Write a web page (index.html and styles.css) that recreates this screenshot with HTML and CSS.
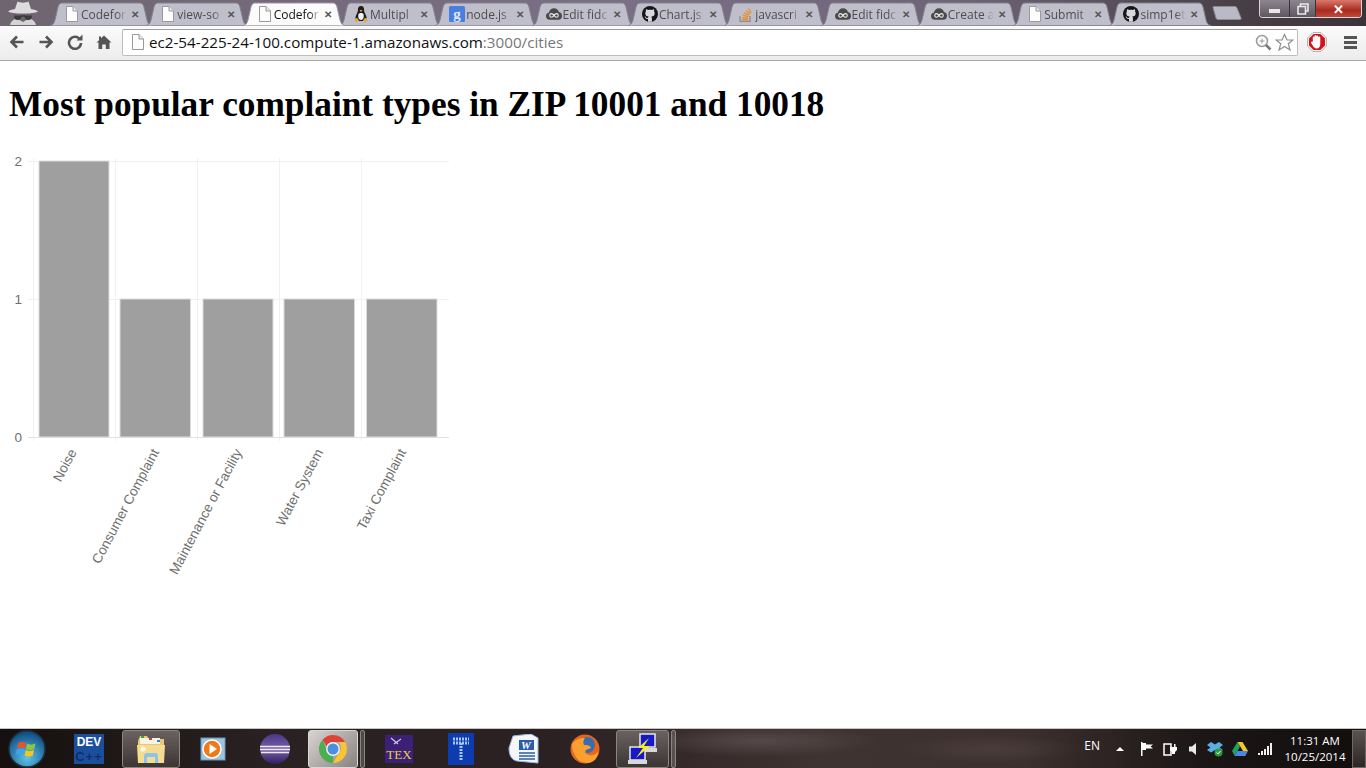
FILE: index.html
```html
<!DOCTYPE html>
<html lang="en">

<head>
    <meta charset="UTF-8">
    <title>Codefor cities</title>
    <link rel="stylesheet" href="styles.css">
</head>

<body>
    <svg class="defs" width="0" height="0">
        <defs>
            <path id="tab-bg" d="M0 23.500C3 23.500 4 21 5 18L8 5C8.600 2.500 10 1 12 1H90C92 1 93.400 2.500 94 5L97 18C98 21 99 23.500 102 23.500" />
            <g id="ic-doc">
                <path d="M2.500 .5H9L13.500 5V15.500H2.500Z" fill="#fdfdfd" stroke="#9a9a9a" />
                <path d="M9 .5V5H13.500" fill="#e6e6e6" stroke="#9a9a9a" />
            </g>
            <g id="ic-cloud">
                <path d="M4 14C1.500 14 0 12.300 0 10.300C0 8.400 1.300 7 3 6.800C3.500 4 5.700 2 8.500 2C11 2 13 3.500 13.700 5.800C15.900 6 17 7.800 17 10C17 12.300 15.500 14 13 14Z" fill="#4a4a4a" />
                <path d="M8.500 9.500C7.500 8 6.800 7.600 5.800 7.600C4.700 7.600 4 8.400 4 9.500C4 10.600 4.700 11.400 5.800 11.400C6.800 11.400 7.500 11 8.500 9.500C9.500 8 10.200 7.600 11.200 7.600C12.300 7.600 13 8.400 13 9.500C13 10.600 12.300 11.400 11.200 11.400C10.200 11.400 9.500 11 8.500 9.500Z" fill="none" stroke="#ececec" stroke-width="1.200" />
            </g>
            <g id="ic-github">
                <circle cx="8" cy="8" r="8" fill="#161616" />
                <path d="M6 15.800V13C3.800 13.400 3.300 12 3 11.300C2.800 10.900 2.300 10.500 2.700 10.400C3.400 10.400 3.800 11 4.100 11.400C4.700 12.300 5.500 12 6.100 11.800C6.200 11.200 6.400 10.800 6.700 10.600C4.600 10.300 3.300 9.400 3.300 7.200C3.300 6.400 3.600 5.700 4 5.200C3.800 4.800 3.700 4 4.100 3.200C4.900 3.200 5.600 3.600 6.100 4C7.300 3.700 8.700 3.700 9.900 4C10.400 3.600 11.100 3.200 11.900 3.200C12.300 4 12.200 4.800 12 5.200C12.400 5.700 12.700 6.400 12.700 7.200C12.700 9.400 11.400 10.300 9.300 10.600C9.700 11 9.900 11.500 9.900 12.200V15.800Z" fill="#d8d8e0" />
            </g>
        </defs>
    </svg>

    <header class="frame">
        <svg class="incognito" width="36" height="25" viewBox="0 0 36 25">
            <path d="M10 9L12.500 1.500C15 3 21 3 23.500 1.500L26 9C29 9.500 32 10.500 33 11.500C30 13 26 13.500 18 13.500C10 13.500 6 13 3 11.500C4 10.500 7 9.500 10 9Z" fill="#dcdcdc" />
            <path d="M5 25C6 21 9 19 12 18.500L18 22L24 18.500C27 19 30 21 31 25Z" fill="#d4d4d4" />
            <path d="M9 15.500H16.500C16.800 18.500 15.200 20 12.700 20C10.200 20 9 18.500 9 15.500ZM19.500 15.500H27C27 18.500 25.800 20 23.300 20C20.800 20 19.200 18.500 19.500 15.500Z" fill="#3a3a3a" />
            <path d="M16 16H20" stroke="#3a3a3a" stroke-width="1.500" />
        </svg>

        <nav class="tabs">
            <div class="tab">
                <svg class="tab-shape" viewBox="0 0 102 24"><use href="#tab-bg" /></svg>
                <svg class="favicon" viewBox="0 0 16 16"><use href="#ic-doc" /></svg>
                <span class="tab-title">Codefor</span><span class="tab-close">&#10005;</span>
            </div>
            <div class="tab">
                <svg class="tab-shape" viewBox="0 0 102 24"><use href="#tab-bg" /></svg>
                <svg class="favicon" viewBox="0 0 16 16"><use href="#ic-doc" /></svg>
                <span class="tab-title">view-so</span><span class="tab-close">&#10005;</span>
            </div>
            <div class="tab tab-active">
                <svg class="tab-shape" viewBox="0 0 102 24"><use href="#tab-bg" /></svg>
                <svg class="favicon" viewBox="0 0 16 16"><use href="#ic-doc" /></svg>
                <span class="tab-title">Codefor</span><span class="tab-close">&#10005;</span>
            </div>
            <div class="tab">
                <svg class="tab-shape" viewBox="0 0 102 24"><use href="#tab-bg" /></svg>
                <svg class="favicon" viewBox="0 0 16 16">
                    <path d="M8 0C5.500 0 4.800 2 4.900 4.500C5 6.500 3 8.500 2.500 11C2.300 12.500 3 15 8 15C13 15 13.700 12.500 13.500 11C13 8.500 11 6.500 11.100 4.500C11.200 2 10.500 0 8 0Z" fill="#1c1c1c" />
                    <path d="M5.500 8C5 10 5 13.500 8 14C11 13.500 11 10 10.500 8C10 6.500 6 6.500 5.500 8Z" fill="#f2f2f2" />
                    <path d="M6.500 4.500L8 3.800L9.500 4.500L8 6Z" fill="#e8a820" />
                    <path d="M1.500 14.500L4 11.500L6 14.500L3.500 16ZM14.500 14.500L12 11.500L10 14.500L12.500 16Z" fill="#e8a820" />
                </svg>
                <span class="tab-title">Multipl</span><span class="tab-close">&#10005;</span>
            </div>
            <div class="tab">
                <svg class="tab-shape" viewBox="0 0 102 24"><use href="#tab-bg" /></svg>
                <svg class="favicon" viewBox="0 0 16 16">
                    <rect width="16" height="16" rx="1.500" fill="#4a7de0" />
                    <text class="g-letter" x="8" y="13">g</text>
                </svg>
                <span class="tab-title">node.js</span><span class="tab-close">&#10005;</span>
            </div>
            <div class="tab">
                <svg class="tab-shape" viewBox="0 0 102 24"><use href="#tab-bg" /></svg>
                <svg class="favicon" viewBox="0 0 17 16"><use href="#ic-cloud" /></svg>
                <span class="tab-title">Edit fidc</span><span class="tab-close">&#10005;</span>
            </div>
            <div class="tab">
                <svg class="tab-shape" viewBox="0 0 102 24"><use href="#tab-bg" /></svg>
                <svg class="favicon" viewBox="0 0 16 16"><use href="#ic-github" /></svg>
                <span class="tab-title">Chart.js</span><span class="tab-close">&#10005;</span>
            </div>
            <div class="tab">
                <svg class="tab-shape" viewBox="0 0 102 24"><use href="#tab-bg" /></svg>
                <svg class="favicon" viewBox="0 0 16 16">
                    <path d="M2 10V15.500H12V10" fill="none" stroke="#8c8c8c" stroke-width="1.300" />
                    <path d="M4 13.800H10M4.200 11.600L10 12.200M4.800 9.300L10.300 10.600M6 6.800L11 9.200M8 4.500L12 8M10.500 2.500L13.200 6.800" fill="none" stroke="#e8912c" stroke-width="1.400" />
                </svg>
                <span class="tab-title">javascri</span><span class="tab-close">&#10005;</span>
            </div>
            <div class="tab">
                <svg class="tab-shape" viewBox="0 0 102 24"><use href="#tab-bg" /></svg>
                <svg class="favicon" viewBox="0 0 17 16"><use href="#ic-cloud" /></svg>
                <span class="tab-title">Edit fidc</span><span class="tab-close">&#10005;</span>
            </div>
            <div class="tab">
                <svg class="tab-shape" viewBox="0 0 102 24"><use href="#tab-bg" /></svg>
                <svg class="favicon" viewBox="0 0 17 16"><use href="#ic-cloud" /></svg>
                <span class="tab-title">Create a</span><span class="tab-close">&#10005;</span>
            </div>
            <div class="tab">
                <svg class="tab-shape" viewBox="0 0 102 24"><use href="#tab-bg" /></svg>
                <svg class="favicon" viewBox="0 0 16 16"><use href="#ic-doc" /></svg>
                <span class="tab-title">Submit</span><span class="tab-close">&#10005;</span>
            </div>
            <div class="tab">
                <svg class="tab-shape" viewBox="0 0 102 24"><use href="#tab-bg" /></svg>
                <svg class="favicon" viewBox="0 0 16 16"><use href="#ic-github" /></svg>
                <span class="tab-title">simp1et</span><span class="tab-close">&#10005;</span>
            </div>
            <svg class="new-tab" width="30" height="14" viewBox="0 0 30 14">
                <path d="M1 1.500C1 1 1.500 .5 2 .5H23C24 .5 24.500 1 25 2L29 12C29.300 13 29 13.500 28 13.500H6C5 13.500 4.500 13 4 12Z" />
            </svg>
        </nav>

        <div class="win-controls">
            <div class="win-btn win-min"><span class="min-glyph"></span></div>
            <div class="win-btn win-max">
                <svg width="12" height="12" viewBox="0 0 12 12">
                    <path d="M3.500 3V1H11V8H9M1 3.500H8.500V11H1Z" fill="none" stroke="#e8e8e8" stroke-width="1.600" />
                </svg>
            </div>
            <div class="win-btn win-close">&#10005;</div>
        </div>
    </header>

    <div class="toolbar">
        <svg class="tool" width="16" height="16" viewBox="0 0 16 16">
            <path d="M14.500 8H3M8 2.500L2.500 8L8 13.500" />
        </svg>
        <svg class="tool" width="16" height="16" viewBox="0 0 16 16">
            <path d="M1.500 8H13M8 2.500L13.500 8L8 13.500" />
        </svg>
        <svg class="tool" width="16" height="16" viewBox="0 0 16 16">
            <path d="M13 5.500A6 6 0 1 0 14 9" />
            <path class="tool-fill" d="M9.500 6.500H15.500V.5Z" />
        </svg>
        <svg class="tool tool-home" width="16" height="16" viewBox="0 0 16 16">
            <path class="tool-fill" d="M8 1.500L15.500 8.500H13.500V15H9.800V10.500H6.200V15H2.500V8.500H.5L3 6.200V2.500H5V4.300Z" />
        </svg>

        <div class="omnibox">
            <svg class="omni-doc" width="16" height="16" viewBox="0 0 16 16"><use href="#ic-doc" /></svg>
            <span class="url">ec2-54-225-24-100.compute-1.amazonaws.com<span class="url-path">:3000/cities</span></span>
            <svg class="omni-zoom" width="17" height="17" viewBox="0 0 17 17">
                <circle cx="7" cy="7" r="5.500" />
                <path class="zoom-plus" d="M7 4.500V9.500M4.500 7H9.500" />
                <path class="zoom-handle" d="M11 11L15.500 15.500" />
            </svg>
            <svg class="omni-star" width="19" height="19" viewBox="0 0 19 19">
                <path d="M9.500 1.500L12 7H17.800L13.300 10.800L15 17L9.500 13.500L4 17L5.700 10.800L1.200 7H7Z" />
            </svg>
        </div>

        <svg class="adblock" width="20" height="20" viewBox="0 0 20 20">
            <path d="M6 .5H14L19.500 6V14L14 19.500H6L.5 14V6Z" fill="#f4f4f4" stroke="#8a8a8a" stroke-width=".6" />
            <path d="M6.600 2H13.400L18 6.600V13.400L13.400 18H6.600L2 13.400V6.600Z" fill="#d5121c" />
            <path d="M6 10V6C6 4.800 7.500 4.800 7.500 6V4.800C7.500 3.600 9.200 3.600 9.200 4.800C9.200 3.800 11 3.800 11 4.900V5.800C11 4.800 12.800 4.800 12.800 6V11.500C12.800 14.500 11.500 15.800 9.500 15.800C7.800 15.800 6.800 15 5.800 13L4.500 10.800C4 9.500 5.500 9 6 10Z" fill="#fff" transform="translate(-.8 -1) scale(1.100)" />
        </svg>
        <div class="menu-btn"><span></span><span></span><span></span></div>
    </div>

    <main class="page">
        <h1 class="title">Most popular complaint types in ZIP 10001 and 10018</h1>
        <svg class="chart" width="460" height="440" viewBox="0 0 460 440">
            <g class="grid">
                <path d="M33.500 10V293M115.500 10V293M197.500 10V293M279.500 10V293M361.500 10V293" />
                <path d="M28 13.500H449M28 151.500H449" />
            </g>
            <path class="axis" d="M28 289.500H449" />
            <g class="bars">
                <rect x="39" y="13" width="70" height="276" />
                <rect x="120" y="151" width="70.500" height="138" />
                <rect x="203" y="151" width="70" height="138" />
                <rect x="284" y="151" width="70.500" height="138" />
                <rect x="366.500" y="151" width="70.500" height="138" />
            </g>
            <g class="y-labels">
                <text x="22" y="18">2</text>
                <text x="22" y="156">1</text>
                <text x="22" y="294">0</text>
            </g>
            <g class="x-labels">
                <text transform="translate(77 304) rotate(-62)">Noise</text>
                <text transform="translate(159.500 304) rotate(-62)">Consumer Complaint</text>
                <text transform="translate(242.500 304) rotate(-62)">Maintenance or Facility</text>
                <text transform="translate(323.500 304) rotate(-62)">Water System</text>
                <text transform="translate(406.500 304) rotate(-62)">Taxi Complaint</text>
            </g>
        </svg>
    </main>

    <footer class="taskbar">
        <svg class="start-orb" width="38" height="38" viewBox="0 0 38 38">
            <defs>
                <radialGradient id="orb" cx=".5" cy=".75" r=".7">
                    <stop offset="0" stop-color="#5ec3e8" />
                    <stop offset="1" stop-color="#0f4f86" />
                </radialGradient>
            </defs>
            <circle cx="19" cy="19" r="18" fill="url(#orb)" stroke="#20323e" stroke-width="1.500" />
            <path d="M10 13C13 11.500 15 11.500 18 13L16.800 18.500C14 17 12 17 9 18.500Z" fill="#e8522a" />
            <path d="M19 13.500C22 15 24 15 27.500 13.500L26.300 19C23 20.500 21 20.500 18 19Z" fill="#8dc63f" />
            <path d="M8.700 19.500C12 18 14 18 16.500 19.500L15.300 25C13 23.500 11 23.500 7.500 25Z" fill="#3ba5e6" />
            <path d="M17.700 20C20.500 21.500 23 21.500 26 20L24.800 25.500C22 27 19.500 27 16.500 25.500Z" fill="#f8c51c" />
        </svg>

        <div class="task-items">
            <div class="task-item">
                <svg width="30" height="30" viewBox="0 0 30 30">
                    <rect width="30" height="30" fill="#1b4f9c" />
                    <text class="dev-text" x="15" y="12">DEV</text>
                    <text class="cpp-text" x="15" y="27">C++</text>
                </svg>
            </div>
            <div class="task-item task-open">
                <svg width="32" height="32" viewBox="0 0 32 32">
                    <path d="M3 8V29H29V6H14L12 3H5Z" fill="#e8c878" />
                    <rect x="5" y="5" width="20" height="6" fill="#f8f4e4" />
                    <rect x="6" y="3" width="3" height="2" fill="#3aa040" />
                    <rect x="14" y="5" width="3" height="2" fill="#d04030" />
                    <rect x="22" y="7" width="3" height="2" fill="#3080d0" />
                    <path d="M2 12H30L29 30H3Z" fill="#f6dc90" />
                    <path d="M9 30V23C9 21 10 20 12 20H20C22 20 23 21 23 23V30H20V24H12V30Z" fill="#8ac4e8" />
                    <circle cx="8" cy="16" r="2.500" fill="#fff" opacity=".8" />
                </svg>
            </div>
            <div class="task-item">
                <svg width="26" height="26" viewBox="0 0 26 26">
                    <rect x="1" y="2" width="24" height="22" fill="#9cc4dc" stroke="#6a9abc" />
                    <circle cx="12" cy="13" r="9" fill="#f07818" stroke="#fff" stroke-width="1.500" />
                    <path d="M9.500 8L17 13L9.500 18Z" fill="#fff" />
                </svg>
            </div>
            <div class="task-item">
                <svg width="30" height="30" viewBox="0 0 30 30">
                    <defs>
                        <linearGradient id="eclipse" x1="0" y1="0" x2="0" y2="1">
                            <stop offset="0" stop-color="#473788" />
                            <stop offset=".5" stop-color="#7a5ea8" />
                            <stop offset="1" stop-color="#2c2260" />
                        </linearGradient>
                    </defs>
                    <circle cx="15" cy="15" r="15" fill="url(#eclipse)" />
                    <path d="M0 12.500H30M0 15.500H30M1 18.500H29" stroke="#efeaf6" stroke-width="1.400" />
                </svg>
            </div>
            <div class="task-item task-open task-active">
                <svg width="28" height="28" viewBox="0 0 28 28">
                    <path d="M14 0A14 14 0 0 1 26.100 7H14A7 7 0 0 0 7.500 11.500L3.500 4.800A14 14 0 0 1 14 0Z" fill="#dc4437" />
                    <path d="M26.100 7A14 14 0 0 1 14 28L20.100 17.500A7 7 0 0 0 19.500 7Z" fill="#fbc531" />
                    <path d="M3.500 4.800L9.700 19.500A7 7 0 0 0 14 21L14 28A14 14 0 0 1 3.500 4.800Z" fill="#4bae4f" />
                    <circle cx="14" cy="14" r="6.200" fill="#4a8fe0" stroke="#f2f2f2" stroke-width="1.400" />
                </svg>
            </div>
            <div class="task-grip"></div>
            <div class="task-item">
                <svg width="28" height="28" viewBox="0 0 28 28">
                    <rect width="28" height="28" fill="#3c2078" />
                    <path d="M6 3L13 9M9 9L16 4" stroke="#c8c8d8" stroke-width="1.200" />
                    <text class="tex-text" x="14" y="24">TEX</text>
                </svg>
            </div>
            <div class="task-item">
                <svg width="26" height="32" viewBox="0 0 26 32">
                    <rect width="26" height="32" fill="#0c3cb0" />
                    <path class="dots" d="M5 6H21M5 10H21M13 10V28" />
                </svg>
            </div>
            <div class="task-item">
                <svg width="32" height="30" viewBox="0 0 32 30">
                    <path d="M6 2L24 0L31 4V29L10 27C5 26 2 22 2 14Z" fill="#f4f6fa" stroke="#9ab8dc" />
                    <rect x="12" y="6" width="15" height="10" fill="#2a5caa" />
                    <text class="word-text" x="19" y="15">W</text>
                    <path d="M12 19H28M12 22H28M12 25H28" stroke="#2a5caa" stroke-width="1.500" />
                </svg>
            </div>
            <div class="task-item">
                <svg width="30" height="30" viewBox="0 0 30 30">
                    <circle cx="15" cy="15" r="14.500" fill="#e5671e" />
                    <circle cx="17" cy="11" r="8" fill="#3a6cb0" />
                    <path d="M2 10C2 20 8 29 17 29C24 29 28 24 28 17C27 20 23 22 19 21C16 20 14 18 16 16L21 14C20 11 17 11 14 11C13 9 13 7 15 4C9 4 6 6 4 8Z" fill="#f9a030" />
                </svg>
            </div>
            <div class="task-item task-open task-putty">
                <svg width="34" height="32" viewBox="0 0 34 32">
                    <rect x="14" y="1" width="15" height="13" fill="#1818c8" stroke="#e8e8e8" stroke-width="1.500" />
                    <path d="M12 15H31V19H12Z" fill="#d8d8d8" />
                    <rect x="4" y="14" width="15" height="13" fill="#1818c8" stroke="#e8e8e8" stroke-width="1.500" />
                    <path d="M2 27H21V31H2Z" fill="#d8d8d8" />
                    <path d="M23 5L12 15H17L10 25L24 13H18Z" fill="#f4ee20" />
                </svg>
            </div>
            <div class="task-grip"></div>
        </div>

        <div class="tray">
            <span class="tray-lang">EN</span>
            <span class="tray-arrow"></span>
            <svg width="14" height="14" viewBox="0 0 14 14"><path d="M1 0V14H2.500V8H6V6.500H13L10.500 4.500L13 2.500H6V1H2.500V0Z" fill="#fff" /></svg>
            <svg width="16" height="16" viewBox="0 0 16 16"><path d="M1 3H8V14H1Z" fill="none" stroke="#fff" stroke-width="1.500" /><path d="M8 6H11V3H12.500V6H14V9L12 11V13H9V11L7 9V6Z" fill="#fff" /></svg>
            <svg width="10" height="14" viewBox="0 0 10 14"><path d="M1 4.500H4L8 1V13L4 9.500H1Z" fill="#e8e8e8" /></svg>
            <svg width="16" height="16" viewBox="0 0 16 16">
                <path d="M4 1L8 3.500L12 1L16 4L12.500 6.500L16 9L12 11.500L8 9L4 11.500L0 9L3.500 6.500L0 4Z" fill="#5aaee8" />
                <circle cx="11.500" cy="11.500" r="4" fill="#2c9a3a" />
                <path d="M9.500 11.500L11 13L13.500 10" fill="none" stroke="#fff" />
            </svg>
            <svg width="16" height="14" viewBox="0 0 16 14">
                <path d="M5.500 0H10.500L16 9H11Z" fill="#f7c52c" />
                <path d="M5.500 0L8 4.500L2.700 14L0 9Z" fill="#1da261" />
                <path d="M2.700 14L5.300 9H16L13.300 14Z" fill="#4a86e8" />
            </svg>
            <svg width="16" height="12" viewBox="0 0 16 12">
                <path d="M1 10V12H3V10ZM4 8V12H6V8ZM7 6V12H9V6ZM10 3V12H12V3ZM13 0V12H15V0Z" fill="#f0f0f0" />
            </svg>
            <div class="clock">
                <span>11:31 AM</span>
                <span>10/25/2014</span>
            </div>
        </div>
        <div class="show-desktop"></div>
    </footer>
</body>

</html>
```

FILE: styles.css
```css
* {
    margin: 0;
    padding: 0;
    box-sizing: border-box;
}

html,
body {
    height: 100%;
    overflow: hidden;
}

body {
    display: flex;
    flex-direction: column;
    background: #ffffff;
    font-family: "Open Sans", "Liberation Sans", sans-serif;
}

.defs {
    position: absolute;
}

/* window frame and tabs */
.frame {
    display: flex;
    flex: 0 0 26px;
    height: 26px;
    background: linear-gradient(90deg, #6f6570 0, #7b6f86 45%, #6e6478 70%, #4a4048 90%, #3a3338 100%);
}

.incognito {
    flex: 0 0 36px;
    margin-left: 5px;
}

.tabs {
    display: flex;
    flex: 1;
    margin-left: 9px;
    padding-top: 2px;
}

.tab {
    position: relative;
    display: flex;
    align-items: center;
    flex: 0 0 102px;
    height: 24px;
    margin-right: -5.7px;
    padding: 0 0 0 14px;
    font-size: 12px;
    color: #4e4e4e;
}

.tab-active {
    z-index: 2;
    color: #111111;
}

.tab-shape {
    position: absolute;
    top: 0;
    left: 0;
    width: 102px;
    height: 24px;
    fill: #bfbfcb;
    stroke: #85828c;
}

.tab-active .tab-shape {
    fill: #fbfbfb;
    stroke: #9a97a0;
}

.favicon {
    position: relative;
    flex: 0 0 16px;
    width: 16px;
    height: 16px;
}

.tab-title {
    position: relative;
    flex: 0 0 46px;
    margin-left: 1px;
    overflow: hidden;
    white-space: nowrap;
    -webkit-mask-image: linear-gradient(90deg, #000 78%, transparent 100%);
    mask-image: linear-gradient(90deg, #000 78%, transparent 100%);
}

.tab-close {
    position: relative;
    width: 14px;
    margin-left: 1px;
    text-align: center;
    font-size: 10px;
    font-weight: bold;
    color: #555555;
}

.g-letter {
    font-family: "Liberation Serif", serif;
    font-size: 15px;
    font-weight: bold;
    fill: #dfe9fb;
    text-anchor: middle;
}

.new-tab {
    flex: 0 0 30px;
    margin: 4px 0 0 6px;
    fill: #b9bac6;
    stroke: #8c8a92;
}

.win-controls {
    display: flex;
    flex: 0 0 103px;
    height: 18px;
    margin-right: 4px;
    border: 1px solid #d8d4d8;
    border-top: 0;
    border-radius: 0 0 4px 4px;
    overflow: hidden;
}

.win-btn {
    display: flex;
    align-items: center;
    justify-content: center;
    background: linear-gradient(180deg, #8d8690, #5f5860);
    border-right: 1px solid #3a3438;
}

.win-min {
    flex: 0 0 30px;
}

.min-glyph {
    width: 11px;
    height: 4px;
    margin-top: 5px;
    background: #e8e8e8;
}

.win-max {
    flex: 0 0 26px;
}

.win-close {
    flex: 1;
    border-right: 0;
    font-size: 13px;
    font-weight: bold;
    color: #ffffff;
    background: linear-gradient(180deg, #d8796c, #a92a1f 60%, #c04a3a);
}

/* toolbar */
.toolbar {
    display: flex;
    align-items: center;
    flex: 0 0 35px;
    height: 35px;
    padding: 0 9px 2px 9px;
    background: linear-gradient(180deg, #fbfbfb, #ececec);
    border-bottom: 1px solid #a8a8a8;
}

.tool {
    flex: 0 0 16px;
    margin-right: 13px;
    fill: none;
    stroke: #555555;
    stroke-width: 2.6;
}

.tool-fill {
    fill: #555555;
    stroke: none;
}

.tool-home {
    margin-right: 10px;
}

.omnibox {
    display: flex;
    align-items: center;
    flex: 0 0 1176px;
    height: 27px;
    padding: 0 3px 0 7px;
    background: #ffffff;
    border: 1px solid #bdbdbd;
    border-top-color: #9c9c9c;
    border-radius: 2px;
}

.omni-doc {
    flex: 0 0 16px;
}

.url {
    flex: 1;
    margin-left: 3px;
    font-size: 15.2px;
    color: #111111;
    white-space: nowrap;
}

.url-path {
    color: #777777;
}

.omni-zoom {
    margin-right: 3px;
    fill: none;
    stroke: #9a9a9a;
    stroke-width: 1.5;
}

.zoom-plus {
    stroke-width: 1;
}

.zoom-handle {
    stroke: #777777;
    stroke-width: 2.5;
}

.omni-star {
    fill: #ffffff;
    stroke: #8c8c8c;
    stroke-width: 1.2;
}

.adblock {
    margin-left: 9px;
}

.menu-btn {
    display: flex;
    flex-direction: column;
    gap: 2px;
    width: 13px;
    margin-left: 17px;
}

.menu-btn span {
    height: 3px;
    background: #555555;
}

/* page content */
.page {
    flex: 1;
    min-height: 0;
    padding: 8px;
    overflow: hidden;
}

.title {
    margin: 16px 0 23px 1px;
    font-family: "Liberation Serif", serif;
    font-size: 35.3px;
    line-height: 40px;
    color: #000000;
    white-space: nowrap;
}

.chart {
    display: block;
    margin-left: -8px;
    overflow: visible;
}

.grid path {
    fill: none;
    stroke: #f1f1f1;
}

.axis {
    fill: none;
    stroke: #e2e2e2;
}

.bars rect {
    fill: #9f9f9f;
    stroke: #dcdcdc;
    stroke-width: 1;
}

.y-labels text {
    font-family: "Liberation Sans", sans-serif;
    font-size: 13.5px;
    fill: #6e6e6e;
    text-anchor: end;
}

.x-labels text {
    font-family: "Liberation Sans", sans-serif;
    font-size: 13.6px;
    fill: #6e6e6e;
    text-anchor: end;
}

/* taskbar */
.taskbar {
    display: flex;
    align-items: center;
    flex: 0 0 40px;
    height: 40px;
    border-top: 1px solid #c8c4c4;
    background:
        radial-gradient(ellipse 90px 14px at 990px 20px, #4a3c3a, transparent),
        radial-gradient(ellipse 120px 16px at 760px 12px, #54484a, transparent),
        linear-gradient(90deg, #15100f 0, #2a2222 20%, #2b2022 40%, #3f3331 60%, #3c302e 75%, #1c1616 88%, #120e0e 100%);
    color: #ffffff;
}

.start-orb {
    flex: 0 0 38px;
    margin: 0 12px 0 8px;
}

.task-items {
    display: flex;
    align-items: stretch;
    height: 38px;
}

.task-item {
    display: flex;
    align-items: center;
    justify-content: center;
    flex: 0 0 62px;
}

.task-open {
    position: relative;
    flex-basis: 58px;
    margin: 0 2px;
    background: linear-gradient(180deg, #6a6260, #3d3533);
    border: 1px solid #8a8684;
    border-radius: 3px;
}

.task-active {
    flex-basis: 50px;
    background: linear-gradient(135deg, #d8d4d2, #888280);
    border-color: #d8d8d8;
}

.task-putty {
    flex-basis: 53px;
    margin: 0 2px 0 0;
}

.task-grip {
    flex: 0 0 5px;
    margin-right: 3px;
    background: rgba(255, 255, 255, .18);
    border: 1px solid #8a8684;
    border-radius: 2px;
}

.dev-text {
    font-family: "Liberation Sans", sans-serif;
    font-size: 12px;
    font-weight: bold;
    fill: #ffffff;
    text-anchor: middle;
}

.cpp-text {
    font-family: "Liberation Sans", sans-serif;
    font-size: 13px;
    font-weight: bold;
    letter-spacing: 1px;
    fill: #0d2f6c;
    text-anchor: middle;
}

.tex-text {
    font-family: "Liberation Serif", serif;
    font-size: 13px;
    fill: #e8d040;
    text-anchor: middle;
}

.word-text {
    font-family: "Liberation Serif", serif;
    font-size: 11px;
    font-weight: bold;
    font-style: italic;
    fill: #ffffff;
    text-anchor: middle;
}

.dots {
    fill: none;
    stroke: #a8c8f8;
    stroke-width: 3;
    stroke-dasharray: 2 1;
}

.tray {
    display: flex;
    align-items: center;
    gap: 9px;
    margin-left: auto;
    font-size: 12px;
}

.tray-lang {
    margin-right: 7px;
    padding-bottom: 6px;
}

.tray-arrow {
    width: 0;
    height: 0;
    margin-right: 7px;
    border: 4px solid transparent;
    border-top: 0;
    border-bottom: 4px solid #ffffff;
}

.clock {
    display: flex;
    flex-direction: column;
    align-items: center;
    width: 60px;
    margin-left: 3px;
    font-size: 11.5px;
    line-height: 16px;
}

.show-desktop {
    flex: 0 0 14px;
    height: 38px;
    margin-left: 7px;
    background: linear-gradient(180deg, #5a5250, #2c2624);
    border: 1px solid #6e6866;
}
```
